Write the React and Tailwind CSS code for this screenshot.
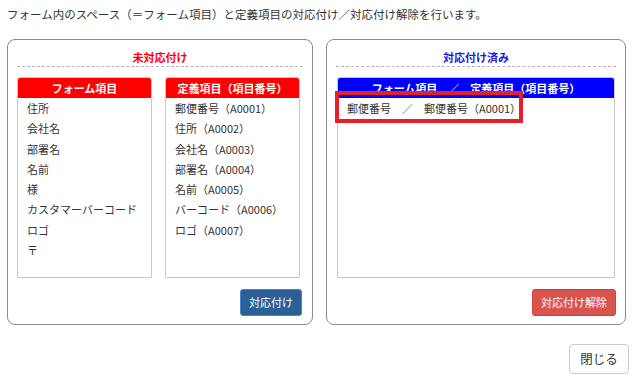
import React from "react";

const font = { fontFamily: '"Noto Sans CJK JP", "Noto Sans", sans-serif' };

const formItems = ["住所", "会社名", "部署名", "名前", "様", "カスタマーバーコード", "ロゴ", "〒"];
const defItems = [
  "郵便番号（A0001）",
  "住所（A0002）",
  "会社名（A0003）",
  "部署名（A0004）",
  "名前（A0005）",
  "バーコード（A0006）",
  "ロゴ（A0007）",
];

const ListBox = ({ title, items, headerClass, className = "" }) => (
  <div className={"flex flex-col h-[201px] border border-[#c8c8c8] rounded-t-[3px] " + className}>
    <div className={"h-[20px] shrink-0 text-center text-white font-bold text-[11px] leading-[20px] rounded-t-[2px] " + headerClass}>
      {title}
    </div>
    <ul className="flex-1 overflow-hidden">
      {items.map((item, i) => (
        <li key={i} className="pl-[9px] text-[11px] leading-[20.3px] text-[#333] whitespace-nowrap">
          {item}
        </li>
      ))}
    </ul>
  </div>
);

const Panel = ({ title, titleClass, width, children }) => (
  <div
    className={"flex flex-col border border-[#8a8a8a] rounded-[8px] px-[9px] pb-[8px] " + width}
  >
    <div className={"pt-[10px] pb-[2px] text-center text-[11px] font-bold leading-[14px] border-b border-dashed border-[#b4b4b4] " + titleClass}>
      {title}
    </div>
    {children}
  </div>
);

export default function App() {
  return (
    <div className="w-[637px] h-[389px] bg-white px-[7px] pt-[7px] text-[#333]" style={font}>
      <p className="text-[11.5px] leading-[14px] text-[#333]">
        フォーム内のスペース（＝フォーム項目）と定義項目の対応付け／対応付け解除を行います。
      </p>

      <div className="flex gap-[13px] mt-[18px]">
        <Panel title="未対応付け" titleClass="text-[#ff0000]" width="w-[306px]">
          <div className="flex gap-[13px] mt-[10px]">
            <ListBox title="フォーム項目" items={formItems} headerClass="bg-[#ff0000]" className="w-[135px]" />
            <ListBox title="定義項目（項目番号）" items={defItems} headerClass="bg-[#ff0000]" className="w-[135px]" />
          </div>
          <div className="flex justify-end mt-[11px] pr-[1px]">
            <button className="w-[62px] h-[27px] rounded-[3px] bg-[#2a6095] border border-[#4a86c0] text-white text-[11px]">
              対応付け
            </button>
          </div>
        </Panel>

        <Panel title="対応付け済み" titleClass="text-[#1a1ae6]" width="w-[300px]">
          <div className="relative mt-[10px] mx-[1px]">
            <ListBox
              title="フォーム項目　／　定義項目（項目番号）"
              items={["郵便番号　／　郵便番号（A0001）"]}
              headerClass="bg-[#0000ff]"
            />
            <div className="absolute left-[-2px] top-[14px] w-[188px] h-[32px] border-[4px] border-[#e5202a]" />
          </div>
          <div className="flex justify-end mt-[11px]">
            <button className="w-[84px] h-[27px] rounded-[3px] bg-[#d9534f] border border-[#d43f3a] text-white text-[11px]">
              対応付け解除
            </button>
          </div>
        </Panel>
      </div>

      <div className="flex justify-end mt-[19px] pr-[1px]">
        <button className="w-[60px] h-[30px] rounded-[4px] bg-white border border-[#ccc] text-[12.5px] text-[#333]">
          閉じる
        </button>
      </div>
    </div>
  );
}
